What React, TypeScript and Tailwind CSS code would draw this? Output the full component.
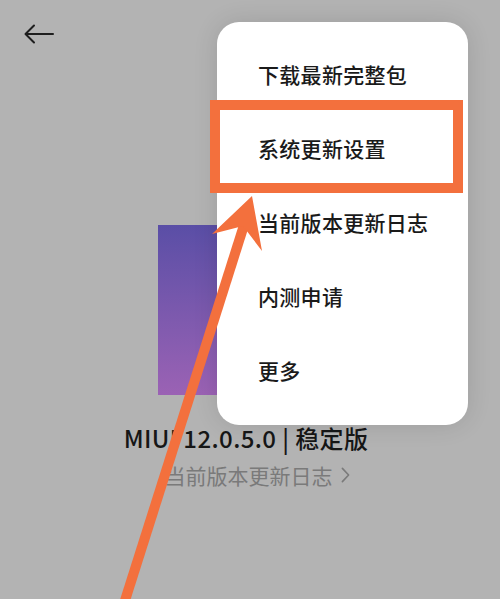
import React from 'react';

const MENU_ITEMS = ['下载最新完整包', '系统更新设置', '当前版本更新日志', '内测申请', '更多'];

const FONT = { fontFamily: '"Noto Sans CJK SC", "Noto Sans", sans-serif' };

export default function App() {
  return (
    <div className="relative w-[500px] h-[599px] overflow-hidden bg-[#b3b3b3]" style={FONT}>
      {/* header */}
      <div className="h-[70px] pl-[24px] pt-[24px]">
        <svg viewBox="0 0 30 20" className="w-[30px] h-[20px]" fill="none" stroke="#1e1e1e" strokeWidth="2" strokeLinecap="round" strokeLinejoin="round">
          <path d="M29 10H2" />
          <path d="M10 1.5L1.5 10l8.5 8.5" />
        </svg>
      </div>

      {/* page body */}
      <div className="flex flex-col items-center pt-[155px]">
        <div className="w-[184px] h-[170px] bg-gradient-to-b from-[#5a4ea6] to-[#9b62b4]" />
        <div className="mt-[29px] ml-[-8px] text-[24px] leading-[28px] font-medium text-[#161616] tracking-[0.4px]">
          MIUI 12.0.5.0 | 稳定版
        </div>
        <div className="mt-[10px] ml-[14px] flex items-center gap-[8px] text-[21px] leading-[26px] text-[#7a7a7a]">
          <span>当前版本更新日志</span>
          <svg viewBox="0 0 10 18" className="w-[9px] h-[16px]" fill="none" stroke="#7a7a7a" strokeWidth="1.8" strokeLinecap="round" strokeLinejoin="round">
            <path d="M1.5 1.5L8.5 9l-7 7.5" />
          </svg>
        </div>
      </div>

      {/* popup menu */}
      <div className="absolute left-[217px] top-[22px] w-[251px] h-[403px] rounded-[22px] bg-white pt-[16px] pl-[41px] shadow-[0_0_24px_rgba(0,0,0,0.12)]">
        {MENU_ITEMS.map((item) => (
          <div key={item} className="h-[74px] flex items-center text-[21px] text-[#1a1a1a] font-medium tracking-[0.3px]">
            {item}
          </div>
        ))}
      </div>

      {/* highlight box */}
      <div className="absolute left-[210px] top-[100px] w-[253px] h-[93px] border-[10px] border-[#f3703d]" />

      {/* pointer arrow */}
      <svg className="absolute left-0 top-0 w-[500px] h-[599px] pointer-events-none" viewBox="0 0 500 599">
        <path d="M122 610L245 222" stroke="#f3703d" strokeWidth="10" />
        <path d="M252 196L212 234L243 226L262 251Z" fill="#f3703d" />
      </svg>
    </div>
  );
}
